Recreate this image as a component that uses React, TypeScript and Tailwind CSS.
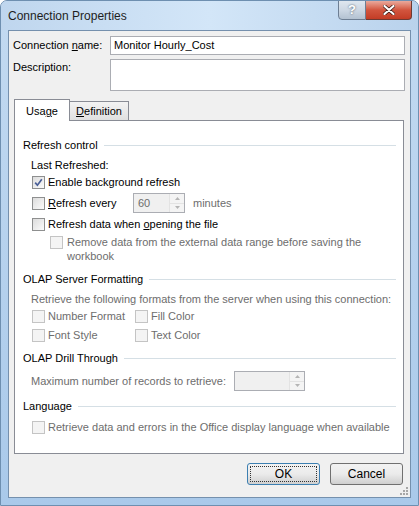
import React from "react";

const font = "font-['Liberation_Sans','Noto_Sans',sans-serif] text-[11px]";

const Checkbox: React.FC<{ checked?: boolean; disabled?: boolean }> = ({
  checked = false,
  disabled = false,
}) => (
  <div
    className={`w-[13px] h-[13px] shrink-0 border flex items-center justify-center ${
      disabled
        ? "border-[#c4c4c4] bg-[#f4f4f4]"
        : "border-[#8e8f8f] bg-gradient-to-br from-[#dcdcdc] to-[#fbfbfb]"
    }`}
  >
    {checked && (
      <svg width="9" height="9" viewBox="0 0 9 9">
        <path
          d="M1.2 4.6 L3.4 7.2 L7.8 1.2"
          fill="none"
          stroke="#4a5f97"
          strokeWidth="1.7"
        />
      </svg>
    )}
  </div>
);

const SectionHeader: React.FC<{ title: string; className?: string }> = ({
  title,
  className = "",
}) => (
  <div className={`h-[16px] flex items-center gap-[6px] ${className}`}>
    <span className="text-black whitespace-nowrap">{title}</span>
    <div className="flex-1 h-px bg-[#d5dfe5]" />
  </div>
);

const SpinBox: React.FC<{ value?: string; width: string }> = ({ value, width }) => (
  <div
    className={`${width} h-[20px] border border-[#abadb3] bg-[#f0f0f0] flex items-stretch`}
  >
    <div className="flex-1 px-[4px] flex items-center text-[#6d6d6d]">{value}</div>
    <div className="w-[15px] flex flex-col border-l border-[#e3e3e3]">
      <div className="flex-1 flex items-center justify-center border-b border-[#e3e3e3] bg-[#f4f4f4]">
        <svg width="5" height="3" viewBox="0 0 5 3">
          <path d="M0 3 L2.5 0 L5 3 Z" fill="#b5b5b5" />
        </svg>
      </div>
      <div className="flex-1 flex items-center justify-center bg-[#f4f4f4]">
        <svg width="5" height="3" viewBox="0 0 5 3">
          <path d="M0 0 L2.5 3 L5 0 Z" fill="#b5b5b5" />
        </svg>
      </div>
    </div>
  </div>
);

const DialogButton: React.FC<{ label: string; isDefault?: boolean }> = ({
  label,
  isDefault = false,
}) => (
  <div
    className={`w-[73px] h-[22px] rounded-[3px] border p-[2px] bg-gradient-to-b from-[#f2f2f2] via-[#ebebeb] to-[#cfcfcf] ${
      isDefault ? "border-[#3c7fb1]" : "border-[#707070]"
    }`}
  >
    <div
      className={`w-full h-full flex items-center justify-center text-black text-[12px] ${
        isDefault ? "border border-dotted border-[#333]" : ""
      }`}
    >
      {label}
    </div>
  </div>
);

export default function App() {
  return (
    <div
      className={`${font} w-[419px] h-[506px] flex flex-col rounded-t-[7px] border border-[#6e8fb0] bg-gradient-to-b from-[#c3daf1] to-[#a9c9ea] overflow-hidden whitespace-nowrap`}
    >
      {/* Title bar */}
      <div className="h-[29px] shrink-0 flex items-start justify-between bg-gradient-to-r from-[#bfd6ee] via-[#d3e6f8] to-[#b9d2ec]">
        <div className="pl-[7px] pt-[6px] text-[#1e1e1e] text-[12px]">Connection Properties</div>
        <div className="flex mr-[6px] -mt-px">
          <div className="w-[28px] h-[20px] rounded-bl-[4px] border border-[#6d7e93] bg-gradient-to-b from-[#dfe7ef] via-[#cdd8e4] to-[#b3c1d1] flex items-center justify-center">
            <span className="font-bold text-[13px] text-white [text-shadow:0_0_2px_#3d4b5c]">?</span>
          </div>
          <div className="w-[46px] h-[20px] rounded-br-[4px] border border-l-0 border-[#6d3a33] bg-gradient-to-b from-[#e9a99c] via-[#d2553e] to-[#c33c25] flex items-center justify-center">
            <svg width="12" height="10" viewBox="0 0 12 10">
              <path
                d="M1.5 1 L10.5 9 M10.5 1 L1.5 9"
                stroke="#3c1a14"
                strokeWidth="3.6"
                strokeLinecap="round"
              />
              <path
                d="M1.5 1 L10.5 9 M10.5 1 L1.5 9"
                stroke="#ffffff"
                strokeWidth="2.2"
                strokeLinecap="round"
              />
            </svg>
          </div>
        </div>
      </div>

      {/* Client area */}
      <div className="mx-[7px] w-[403px] h-[468px] shrink-0 border border-[#7590ad] bg-[#f0f0f0] flex flex-col">
        {/* Connection name */}
        <div className="mt-[5px] flex items-center h-[19px] pl-[4px]">
          <div className="w-[97px]">
            Connection <span className="underline">n</span>ame:
          </div>
          <div className="w-[295px] h-[19px] border border-[#abadb3] bg-white flex items-center px-[3px] text-black">
            Monitor Hourly_Cost
          </div>
        </div>
        {/* Description */}
        <div className="mt-[4px] flex items-start pl-[4px]">
          <div className="w-[97px] leading-[16px]">Description:</div>
          <div className="w-[295px] h-[32px] border border-[#abadb3] bg-white" />
        </div>

        {/* Tabs */}
        <div className="mt-[8px] ml-[5px] flex items-end h-[22px] relative z-10">
          <div className="w-[56px] h-[22px] pt-[2px] border border-b-0 border-[#898c95] bg-white flex items-center justify-center">
            Usa<span className="underline">g</span>e
          </div>
          <div className="w-[59px] h-[19px] mb-px border border-l-0 border-b-0 border-[#898c95] bg-gradient-to-b from-[#f3f3f3] to-[#e0e0e0] flex items-center justify-center">
            <span className="underline">D</span>efinition
          </div>
        </div>

        {/* Tab panel */}
        <div className="ml-[5px] -mt-px w-[390px] h-[338px] border border-[#898c95] bg-white flex flex-col pl-[8px] pr-[7px]">
          <SectionHeader title="Refresh control" className="mt-[16px]" />
          <div className="mt-[4px] h-[16px] flex items-center pl-[8px]">Last Refreshed:</div>
          <div className="mt-[1px] h-[16px] flex items-center gap-[3px] pl-[9px]">
            <Checkbox checked />
            <span>Enable background refresh</span>
          </div>
          <div className="mt-[3px] h-[20px] flex items-center pl-[9px]">
            <Checkbox />
            <span className="ml-[3px] w-[85px]">
              <span className="underline">R</span>efresh every
            </span>
            <SpinBox value="60" width="w-[52px]" />
            <span className="ml-[8px] text-[#6d6d6d]">minutes</span>
          </div>
          <div className="mt-[3px] h-[16px] flex items-center gap-[3px] pl-[9px]">
            <Checkbox />
            <span>
              Refresh data when <span className="underline">o</span>pening the file
            </span>
          </div>
          <div className="mt-[3px] flex items-start gap-[4px] pl-[27px] leading-[14px] text-[#6d6d6d]">
            <div className="mt-[1px]">
              <Checkbox disabled />
            </div>
            <span className="w-[300px] whitespace-normal">
              Remove data from the external data range before saving the workbook
            </span>
          </div>

          <SectionHeader title="OLAP Server Formatting" className="mt-[8px]" />
          <div className="mt-[4px] h-[16px] flex items-center pl-[8px] text-[#6d6d6d]">
            Retrieve the following formats from the server when using this connection:
          </div>
          <div className="mt-[1px] h-[16px] flex items-center pl-[9px] text-[#6d6d6d]">
            <div className="w-[103px] flex items-center gap-[3px]">
              <Checkbox disabled />
              <span>Number Format</span>
            </div>
            <div className="flex items-center gap-[3px]">
              <Checkbox disabled />
              <span>Fill Color</span>
            </div>
          </div>
          <div className="mt-[3px] h-[16px] flex items-center pl-[9px] text-[#6d6d6d]">
            <div className="w-[103px] flex items-center gap-[3px]">
              <Checkbox disabled />
              <span>Font Style</span>
            </div>
            <div className="flex items-center gap-[3px]">
              <Checkbox disabled />
              <span>Text Color</span>
            </div>
          </div>

          <SectionHeader title="OLAP Drill Through" className="mt-[7px]" />
          <div className="mt-[5px] h-[20px] flex items-center pl-[8px] text-[#6d6d6d]">
            <span className="w-[203px]">Maximum number of records to retrieve:</span>
            <SpinBox width="w-[71px]" />
          </div>

          <SectionHeader title="Language" className="mt-[7px]" />
          <div className="mt-[5px] h-[16px] flex items-center gap-[3px] pl-[9px] text-[#6d6d6d]">
            <Checkbox disabled />
            <span>Retrieve data and errors in the Office display language when available</span>
          </div>
        </div>

        {/* Buttons */}
        <div className="mt-[9px] flex justify-end gap-[10px] pr-[7px]">
          <DialogButton label="OK" isDefault />
          <DialogButton label="Cancel" />
        </div>
        <div className="flex-1 flex items-end justify-end pr-[1px] pb-[1px]">
          <svg width="11" height="11" viewBox="0 0 11 11">
            <g fill="#a7a7a7">
              <rect x="8" y="2" width="2" height="2" />
              <rect x="5" y="5" width="2" height="2" />
              <rect x="8" y="5" width="2" height="2" />
              <rect x="2" y="8" width="2" height="2" />
              <rect x="5" y="8" width="2" height="2" />
              <rect x="8" y="8" width="2" height="2" />
            </g>
          </svg>
        </div>
      </div>
    </div>
  );
}
